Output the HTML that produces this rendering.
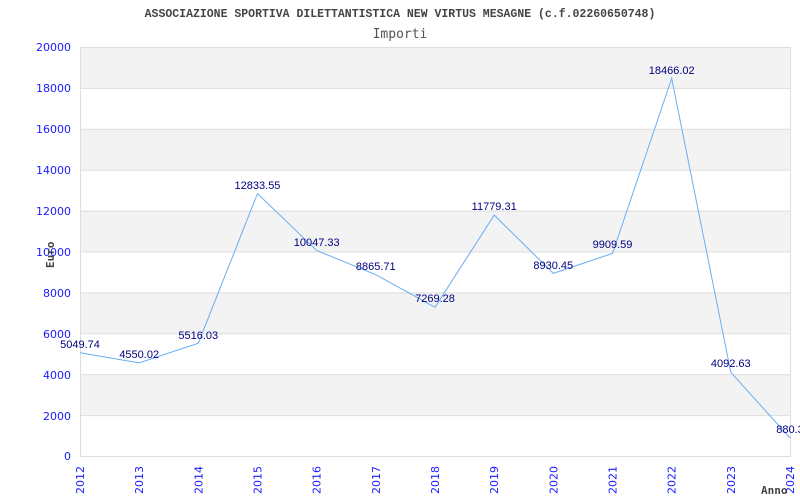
<!DOCTYPE html>
<html><head><meta charset="utf-8"><style>
html,body{margin:0;padding:0;background:#fff;width:800px;height:500px;overflow:hidden}
</style></head><body>
<svg width="800" height="500" xmlns="http://www.w3.org/2000/svg" font-family="'Liberation Sans',sans-serif">
<text x="400" y="17" text-anchor="middle" font-family="'Liberation Mono',monospace" font-weight="bold" font-size="11.5" fill="#444">ASSOCIAZIONE SPORTIVA DILETTANTISTICA NEW VIRTUS MESAGNE (c.f.02260650748)</text>
<text x="400" y="38" text-anchor="middle" font-family="'DejaVu Sans Mono',monospace" font-size="13" fill="#555">Importi</text>
<g fill="#f3f3f3">
<rect x="80.5" y="47" width="710" height="40.9"/>
<rect x="80.5" y="128.8" width="710" height="40.9"/>
<rect x="80.5" y="210.6" width="710" height="40.9"/>
<rect x="80.5" y="292.4" width="710" height="40.9"/>
<rect x="80.5" y="374.2" width="710" height="40.9"/>
</g>
<g stroke="#ddd" stroke-width="1">
<line x1="80" y1="47.5" x2="790" y2="47.5"/><line x1="80" y1="88.4" x2="790" y2="88.4"/><line x1="80" y1="129.3" x2="790" y2="129.3"/><line x1="80" y1="170.2" x2="790" y2="170.2"/><line x1="80" y1="211.1" x2="790" y2="211.1"/><line x1="80" y1="252" x2="790" y2="252"/><line x1="80" y1="292.9" x2="790" y2="292.9"/><line x1="80" y1="333.8" x2="790" y2="333.8"/><line x1="80" y1="374.7" x2="790" y2="374.7"/><line x1="80" y1="415.6" x2="790" y2="415.6"/><line x1="80" y1="456.5" x2="790" y2="456.5"/>
<line x1="80.5" y1="47" x2="80.5" y2="457"/><line x1="790.5" y1="47" x2="790.5" y2="457"/>
</g>
<g font-size="11" fill="#1a1aff" text-anchor="end" font-family="'DejaVu Sans',sans-serif">
<text x="71" y="51">20000</text><text x="71" y="92">18000</text><text x="71" y="133">16000</text><text x="71" y="174">14000</text><text x="71" y="215">12000</text><text x="71" y="256">10000</text><text x="71" y="297">8000</text><text x="71" y="338">6000</text><text x="71" y="379">4000</text><text x="71" y="420">2000</text><text x="71" y="460">0</text>
</g>
<g font-size="11" fill="#1a1aff" text-anchor="end" font-family="'DejaVu Sans',sans-serif">
<text transform="translate(84,466) rotate(-90)">2012</text>
<text transform="translate(143.2,466) rotate(-90)">2013</text>
<text transform="translate(202.3,466) rotate(-90)">2014</text>
<text transform="translate(261.5,466) rotate(-90)">2015</text>
<text transform="translate(320.7,466) rotate(-90)">2016</text>
<text transform="translate(379.8,466) rotate(-90)">2017</text>
<text transform="translate(439,466) rotate(-90)">2018</text>
<text transform="translate(498.2,466) rotate(-90)">2019</text>
<text transform="translate(557.3,466) rotate(-90)">2020</text>
<text transform="translate(616.5,466) rotate(-90)">2021</text>
<text transform="translate(675.7,466) rotate(-90)">2022</text>
<text transform="translate(734.8,466) rotate(-90)">2023</text>
<text transform="translate(794,466) rotate(-90)">2024</text>
</g>
<text transform="translate(54,268) rotate(-90)" font-family="'DejaVu Sans Mono',monospace" font-weight="bold" font-size="11" fill="#444">Euro</text>
<text x="761" y="494" font-family="'DejaVu Sans Mono',monospace" font-weight="bold" font-size="11" fill="#444">Anno</text>
<polyline fill="none" stroke="#6aaef0" stroke-width="1" points="80,352.7 139.2,362.9 198.3,343.2 257.5,193.6 316.7,250.5 375.8,274.7 435,307.3 494.2,215.1 553.3,273.4 612.5,253.4 671.7,78.4 730.8,372.3 790,438"/>
<g font-size="11" fill="#000080" text-anchor="middle">
<text x="80" y="348">5049.74</text><text x="139.2" y="358">4550.02</text><text x="198.3" y="339">5516.03</text><text x="257.5" y="189">12833.55</text><text x="316.7" y="246">10047.33</text><text x="375.8" y="270">8865.71</text><text x="435" y="302">7269.28</text><text x="494.2" y="210">11779.31</text><text x="553.3" y="269">8930.45</text><text x="612.5" y="248">9909.59</text><text x="671.7" y="74">18466.02</text><text x="730.8" y="367">4092.63</text><text x="790" y="433">880.3</text>
</g>
</svg>
</body></html>
